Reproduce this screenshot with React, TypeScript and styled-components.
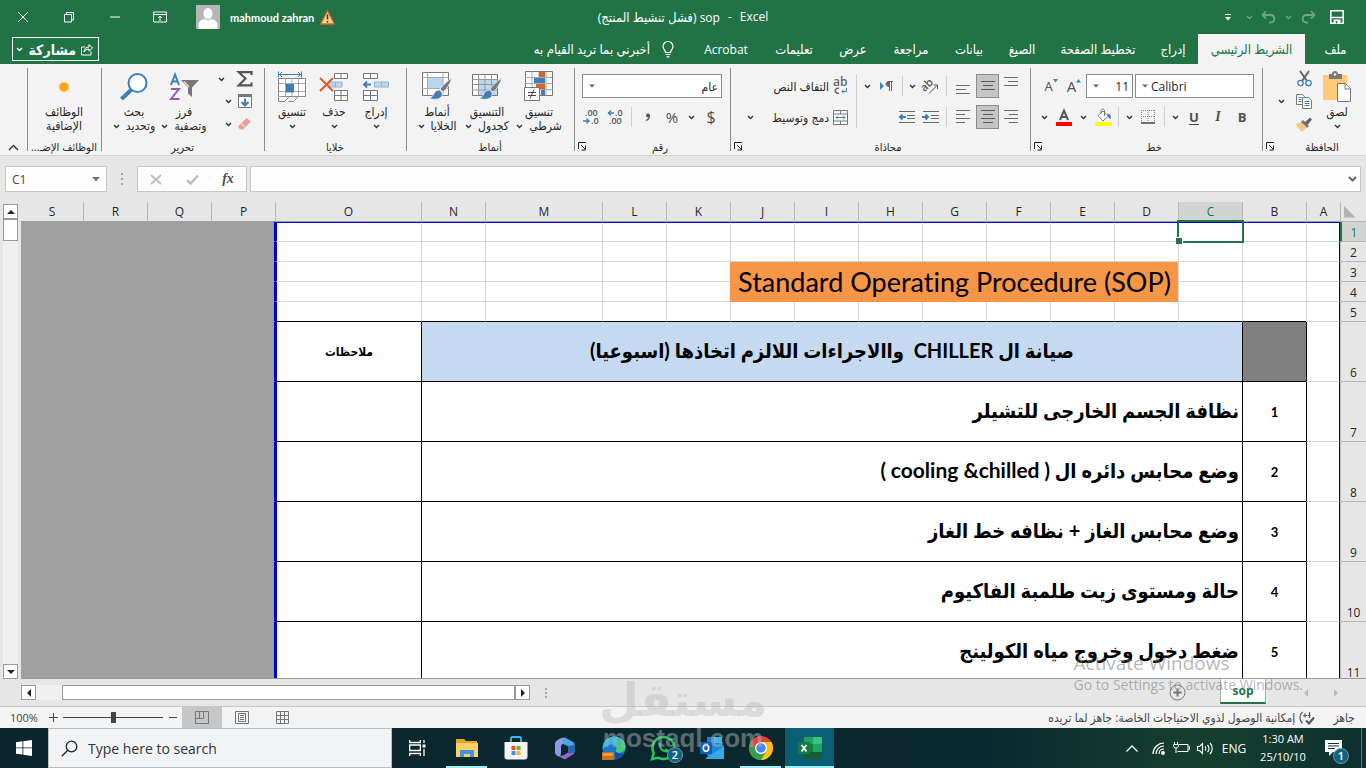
import React from "react";
import styled, { createGlobalStyle } from "styled-components";

const UI_FONT = '"Open Sans", "DejaVu Sans Condensed", "DejaVu Sans", sans-serif';
const SHEET_FONT = 'Lato, "DejaVu Sans Condensed", "DejaVu Sans", sans-serif';
const GREEN = "#217346";
const BLUE = "#3f7fb8";

const GlobalStyle = createGlobalStyle`
  * { box-sizing: border-box; }
  body { margin: 0; font-family: ${UI_FONT}; font-size: 12px; color: #262626; }
  button, input, select { font: inherit; color: inherit; margin: 0; padding: 0; border: 0; background: none; border-radius: 0; }
  svg { display: block; flex: none; direction: ltr; overflow: visible; }
`;

const Page = styled.div`
  display: flex;
  flex-direction: column;
  height: 100vh;
  overflow: hidden;
  position: relative;
  background: #e6e6e6;
`;

/* ---------- title bar ---------- */

const TitleBar = styled.header`
  display: grid;
  grid-template-columns: 1fr auto 1fr;
  align-items: center;
  height: 34px;
  flex: none;
  background: ${GREEN};
  color: #fff;
`;

const TitleSide = styled.div<{ $end?: boolean }>`
  display: flex;
  align-items: center;
  justify-content: ${(p) => (p.$end ? "flex-end" : "flex-start")};
  padding-right: ${(p) => (p.$end ? 9 : 0)}px;
`;

const IconButton = styled.button<{ $w: number; $h?: number; $dim?: boolean; $on?: boolean }>`
  display: flex;
  align-items: center;
  justify-content: center;
  flex: none;
  direction: ltr;
  width: ${(p) => p.$w}px;
  height: ${(p) => p.$h ?? 24}px;
  opacity: ${(p) => (p.$dim ? 0.35 : 1)};
  background: ${(p) => (p.$on ? "#c5c5c5" : "transparent")};
  border: ${(p) => (p.$on ? "1px solid #8c8c8c" : "0")};
`;

const Avatar = styled.span`
  margin-left: 14px;
  margin-right: 10px;
`;

const UserName = styled.span`
  font-family: Lato, sans-serif;
  font-size: 11px;
  font-weight: 700;
  margin-right: 6px;
`;

const DocTitle = styled.h1`
  margin: 0;
  font-size: 12px;
  font-weight: 400;
  display: flex;
  gap: 8px;
`;

const ArabicTitle = styled.bdi`
  font-size: 13px;
`;

/* ---------- tabs ---------- */

const TabBar = styled.nav`
  display: flex;
  align-items: stretch;
  height: 30px;
  flex: none;
  background: ${GREEN};
  color: #fff;
`;

const Tab = styled.button<{ $w: number; $active?: boolean; $latin?: boolean }>`
  width: ${(p) => p.$w}px;
  flex: none;
  white-space: nowrap;
  font-size: ${(p) => (p.$latin ? 12 : 13)}px;
  background: ${(p) => (p.$active ? "#f3f3f3" : "transparent")};
  color: ${(p) => (p.$active ? GREEN : "#fff")};
`;

const TellMe = styled.button`
  display: flex;
  align-items: center;
  gap: 12px;
  margin-right: 16px;
  white-space: nowrap;
  font-size: 13px;
`;

const Share = styled.button`
  display: flex;
  align-items: center;
  gap: 5px;
  margin: 3px auto 3px 12px;
  padding: 0 5px;
  border: 1px solid #fff;
  width: 87px;
  height: 24px;
  font-size: 14px;
  font-weight: 700;
  justify-content: space-between;
`;

/* ---------- ribbon ---------- */

const Ribbon = styled.div`
  display: flex;
  height: 92px;
  flex: none;
  background: #f3f3f3;
  border-bottom: 1px solid #d2d2d2;
`;

const Group = styled.section<{ $w: number }>`
  display: flex;
  flex-direction: column;
  width: ${(p) => p.$w}px;
  flex: none;
  height: 86px;
  margin-top: 4px;
  background: linear-gradient(#8c8c8c, #8c8c8c) left top / 1px 83px no-repeat;
`;

const GroupBody = styled.div<{ $pad?: number }>`
  display: flex;
  flex: 1;
  padding-right: ${(p) => p.$pad ?? 8}px;
`;

const GroupFoot = styled.div`
  display: flex;
  align-items: center;
  height: 16px;
  font-size: 11px;
`;

const GroupName = styled.span`
  flex: 1;
  text-align: center;
  white-space: nowrap;
`;

const Rows = styled.div`
  display: flex;
  flex-direction: column;
  gap: 7px;
  padding-top: 6px;
`;

const Row = styled.div`
  display: flex;
  align-items: center;
  height: 24px;
`;

const Stack = styled.div<{ $w: number }>`
  display: flex;
  flex-direction: column;
  width: ${(p) => p.$w}px;
`;

const Divider = styled.span<{ $tall?: boolean }>`
  width: 8px;
  height: ${(p) => (p.$tall ? 54 : 20)}px;
  background: linear-gradient(#d0d0d0, #d0d0d0) center / 1px 100% no-repeat;
`;

const BigButton = styled.button<{ $w: number }>`
  display: grid;
  grid-template-rows: 37px 14px 14px;
  justify-items: center;
  align-items: center;
  align-content: start;
  width: ${(p) => p.$w}px;
  flex: none;
  font-size: 12px;
  line-height: 14px;
  white-space: nowrap;
`;

const LabelLine = styled.span`
  display: flex;
  align-items: center;
  gap: 6px;
`;

const SelectBox = styled.span<{ $w: number }>`
  display: flex;
  align-items: center;
  flex: none;
  direction: ltr;
  width: ${(p) => p.$w}px;
  height: 24px;
  margin-left: 2px;
  padding-left: 6px;
  background: #fff;
  border: 1px solid #8c8c8c;
`;

const Select = styled.select<{ $right?: boolean }>`
  appearance: none;
  flex: 1;
  min-width: 0;
  height: 20px;
  padding: 0 3px;
  text-align: ${(p) => (p.$right ? "right" : "left")};
  text-align-last: ${(p) => (p.$right ? "right" : "left")};
  outline: 0;
`;

const Glyph = styled.span<{ $size?: number; $u?: boolean; $i?: boolean; $b?: boolean }>`
  color: #4f4f4f;
  font-size: ${(p) => p.$size ?? 13}px;
  font-weight: ${(p) => (p.$b ? 700 : 400)};
  font-style: ${(p) => (p.$i ? "italic" : "normal")};
  font-family: ${(p) => (p.$i ? '"Liberation Serif", serif' : UI_FONT)};
  border-bottom: ${(p) => (p.$u ? "1px solid #4f4f4f" : "0")};
  line-height: 14px;
`;

const TextButton = styled.button<{ $w: number }>`
  display: flex;
  align-items: center;
  gap: 4px;
  width: ${(p) => p.$w}px;
  height: 24px;
  padding-right: 4px;
  white-space: nowrap;
  font-size: 12px;
`;

const Collapse = styled.button`
  flex: 1;
  align-self: flex-end;
  display: flex;
  justify-content: center;
  padding-bottom: 4px;
`;

/* ---------- formula bar ---------- */

const FormulaBar = styled.div`
  display: flex;
  align-items: center;
  height: 46px;
  flex: none;
  padding: 0 5px;
`;

const WhiteBox = styled.div<{ $w?: number }>`
  display: flex;
  align-items: center;
  width: ${(p) => (p.$w ? p.$w + "px" : "auto")};
  flex: ${(p) => (p.$w ? "none" : "1")};
  height: 26px;
  background: #fdfdfd;
  border: 1px solid #c6c6c6;
  padding: 0 6px;
`;

const FormulaBox = styled(WhiteBox)`
  padding: 0 3px;
`;

const PlainInput = styled.input`
  flex: 1;
  min-width: 0;
  height: 22px;
  outline: 0;
  color: #444;
`;

const Dots = styled.span<{ $w: number }>`
  display: flex;
  justify-content: center;
  width: ${(p) => p.$w}px;
`;

/* ---------- sheet ---------- */

const SheetArea = styled.main`
  display: flex;
  flex: 1;
  min-height: 0;
`;

const VScroll = styled.div`
  display: flex;
  flex-direction: column;
  width: 21px;
  flex: none;
  padding: 2px 3px 0;
`;

const ScrollButton = styled.button`
  display: flex;
  align-items: center;
  justify-content: center;
  width: 15px;
  height: 15px;
  flex: none;
  background: #fff;
  border: 1px solid #999;
`;

const VThumb = styled.div`
  width: 15px;
  height: 22px;
  background: #fff;
  border: 1px solid #999;
`;

const VTrack = styled.div`
  flex: 1;
  width: 15px;
  background: #f0f0f0;
`;

const SheetView = styled.div`
  flex: 1;
  min-width: 0;
  overflow: hidden;
  border-bottom: 1px solid #999;
`;

const Table = styled.table`
  width: 100%;
  table-layout: fixed;
  border-collapse: separate;
  border-spacing: 0;
`;

const Tr = styled.tr<{ $h: number }>`
  height: ${(p) => p.$h}px;
`;

const ColHead = styled.th<{ $sel?: boolean; $first?: boolean }>`
  padding: 0;
  font-size: 12px;
  font-weight: 400;
  line-height: 18px;
  color: ${(p) => (p.$sel ? GREEN : "#262626")};
  background: ${(p) => (p.$sel ? "#d2d4d3" : "#e6e6e6")};
  border-bottom: 1px solid #9f9f9f;
  border-left: ${(p) => (p.$first ? 0 : 1)}px solid #b6b6b6;
`;

const Corner = styled.td`
  padding: 0 10px 0 0;
  border-bottom: 1px solid #b6b6b6;
  border-left: 1px solid #b6b6b6;
`;

const RowHead = styled.th<{ $sel?: boolean }>`
  padding: 0;
  vertical-align: bottom;
  font-size: 12px;
  font-weight: 400;
  line-height: 17px;
  color: ${(p) => (p.$sel ? GREEN : "#262626")};
  background: ${(p) => (p.$sel ? "#d2d4d3" : "#e6e6e6")};
  border-bottom: 1px solid #b6b6b6;
  border-left: ${(p) => (p.$sel ? "2px solid " + GREEN : "1px solid #b6b6b6")};
`;

interface CellProps {
  $l?: string;
  $b?: string;
  $blueTop?: boolean;
  $blueRight?: boolean;
  $blueLeft?: boolean;
  $bg?: string;
  $size?: number;
  $align?: string;
  $plain?: boolean;
}

const PRINT_BLUE = "#0000d0";

const Cell = styled.td<CellProps>`
  position: relative;
  padding: 0 3px;
  background: ${(p) => p.$bg ?? "#fff"};
  font-family: ${SHEET_FONT};
  font-size: ${(p) => p.$size ?? 13}px;
  font-weight: ${(p) => (p.$plain ? 400 : 700)};
  font-variant-ligatures: no-common-ligatures;
  line-height: 18px;
  color: #000;
  white-space: pre;
  text-align: ${(p) => p.$align ?? "center"};
  border-bottom: 1px solid ${(p) => p.$b ?? "#d4d4d4"};
  border-left: ${(p) => (p.$blueLeft ? "2px solid " + PRINT_BLUE : "1px solid " + (p.$l ?? "#d4d4d4"))};
  border-top: ${(p) => (p.$blueTop ? "1px solid " + PRINT_BLUE : "0")};
  border-right: ${(p) => (p.$blueRight ? "1px solid " + PRINT_BLUE : "0")};
`;

const TaskCell = styled(Cell)`
  padding-bottom: 3px;
`;

const Latin = styled.span`
  font-size: 21px;
`;

const Selection = styled.div`
  position: absolute;
  z-index: 1;
  top: -3px;
  left: -2px;
  right: -2px;
  bottom: -2px;
  border: 2px solid ${GREEN};
  &::after {
    content: "";
    position: absolute;
    left: -3px;
    bottom: -3px;
    width: 6px;
    height: 6px;
    background: ${GREEN};
    border-top: 1px solid #fff;
    border-right: 1px solid #fff;
  }
`;

/* ---------- sheet tabs + status ---------- */

const SheetFoot = styled.div`
  display: flex;
  align-items: center;
  height: 27px;
  flex: none;
  padding-left: 21px;
`;

const FootEnd = styled.div`
  display: flex;
  align-items: center;
  height: 27px;
  margin-left: auto;
  padding-right: 10px;
`;

const HTrack = styled.div`
  display: flex;
  width: 479px;
  flex: none;
  padding-left: 26px;
  background: linear-gradient(#f0f0f0, #f0f0f0) left / 26px 15px no-repeat;
`;

const HThumb = styled.div`
  flex: 1;
  height: 15px;
  background: #fff;
  border: 1px solid #999;
`;

const SheetTab = styled.button`
  align-self: flex-start;
  width: 46px;
  height: 25px;
  margin: 0 30px;
  background: #fff;
  color: ${GREEN};
  font-weight: 700;
  border: 1px solid #ababab;
  border-top: 0;
  border-bottom: 2px solid ${GREEN};
`;

const StatusBar = styled.footer`
  display: flex;
  align-items: center;
  height: 22px;
  flex: none;
  background: #f3f3f3;
  border-top: 1px solid #c6c6c6;
  font-size: 11px;
  color: #444;
`;

const ZoomValue = styled.span`
  width: 44px;
  padding-left: 10px;
`;

const Zoom = styled.input`
  appearance: none;
  width: 100px;
  height: 12px;
  background: linear-gradient(#444, #444) center / 100% 1px no-repeat;
  &::-webkit-slider-thumb {
    appearance: none;
    width: 5px;
    height: 11px;
    background: #444;
  }
`;

const ViewButton = styled.button<{ $on?: boolean }>`
  display: flex;
  align-items: center;
  justify-content: center;
  width: 40px;
  height: 21px;
  background: ${(p) => (p.$on ? "#c6c6c6" : "transparent")};
`;

const StatusText = styled.div`
  display: flex;
  align-items: center;
  gap: 18px;
  direction: rtl;
  margin-left: auto;
  padding-right: 11px;
  white-space: nowrap;
  font-size: 12px;
`;

const StatusItem = styled.span`
  display: flex;
  align-items: center;
  gap: 4px;
`;

/* ---------- taskbar ---------- */

const Taskbar = styled.div`
  display: flex;
  align-items: stretch;
  height: 40px;
  flex: none;
  color: #fff;
  background: linear-gradient(90deg, #0b262d 0%, #0c282f 72%, #15402f 88%, #10352f 96%, #0e3030 100%);
`;

const StartButton = styled.button`
  display: flex;
  align-items: center;
  justify-content: center;
  width: 48px;
`;

const SearchBox = styled.label`
  display: flex;
  align-items: center;
  gap: 10px;
  width: 344px;
  margin-right: 1px;
  padding-left: 12px;
  background: #f3f4f6;
  border: 1px solid #bdbdbd;
  color: #222;
`;

const SearchInput = styled.input`
  flex: 1;
  min-width: 0;
  font-size: 14px;
  outline: 0;
  &::placeholder { color: #333; opacity: 1; }
`;

const TaskButton = styled.button<{ $open?: boolean; $active?: boolean }>`
  position: relative;
  display: flex;
  align-items: center;
  justify-content: center;
  width: 49px;
  flex: none;
  background: ${(p) => (p.$active ? "#0a5f74" : "transparent")};
  &::after {
    content: "";
    display: ${(p) => (p.$open ? "block" : "none")};
    position: absolute;
    bottom: 0;
    left: ${(p) => (p.$active ? 0 : 4)}px;
    right: ${(p) => (p.$active ? 0 : 4)}px;
    height: 2px;
    background: #9cecf7;
  }
`;

const Badge = styled.span<{ $r: number; $b: number }>`
  position: absolute;
  right: ${(p) => p.$r}px;
  bottom: ${(p) => p.$b}px;
  width: 16px;
  height: 16px;
  border-radius: 50%;
  background: #0f6580;
  border: 1px solid #6d98a5;
  font-size: 11px;
  font-weight: 600;
  line-height: 14px;
  text-align: center;
`;

const Tray = styled.div`
  display: flex;
  align-items: center;
  margin-left: auto;
`;

const Lang = styled.button`
  width: 32px;
  font-size: 12px;
`;

const Clock = styled.time`
  width: 66px;
  text-align: center;
  font-size: 11px;
  line-height: 18px;
  white-space: nowrap;
`;

const Notify = styled.button`
  position: relative;
  display: flex;
  align-items: center;
  justify-content: center;
  width: 46px;
  height: 40px;
  padding-right: 10px;
  border-right: 1px solid #5d7577;
  margin-right: 4px;
`;

/* ---------- overlays ---------- */

const Activate = styled.div`
  position: absolute;
  z-index: 3;
  right: 63px;
  bottom: 73px;
  color: rgba(120, 120, 120, 0.55);
  font-size: 14px;
  line-height: 20px;
  pointer-events: none;
  white-space: nowrap;
`;

const ActivateTitle = styled.div`
  font-size: 19px;
  line-height: 24px;
`;

const Watermark = styled.div`
  position: absolute;
  z-index: 3;
  left: 0;
  right: 0;
  bottom: 15px;
  color: rgba(170, 175, 175, 0.5);
  font-family: "Liberation Sans", sans-serif;
  font-weight: 700;
  font-size: 26px;
  line-height: 30px;
  text-align: center;
  pointer-events: none;
`;

const WatermarkWord = styled.div`
  font-family: "DejaVu Sans", sans-serif;
  font-size: 46px;
  line-height: 46px;
  color: rgba(180, 180, 180, 0.4);
`;

/* ---------- drawings ---------- */

const Chev = ({ c = "#333" }: { c?: string }) => (
  <svg width="7" height="5" viewBox="0 0 7 5"><path d="M1 1l2.5 2.5L6 1" fill="none" stroke={c} strokeWidth="1.4" /></svg>
);
const Tri = () => (
  <svg width="6" height="4" viewBox="0 0 6 4"><path d="M0 .5h6L3 3.5z" fill="#666" /></svg>
);
const Launcher = () => (
  <svg width="9" height="9" viewBox="0 0 9 9" fill="none" stroke="#222"><path d="M.5 7V.5H8M3 3l4.500 4.500M7.500 3.500v4.500H3.500" /></svg>
);
const Lines = ({ w, y = 0 }: { w: number[]; y?: number }) => (
  <svg width="16" height="18" viewBox="0 0 16 18" stroke="#6a6a6a">
    {w.map((n, i) => {
      const side = n < 0;
      const len = Math.abs(n);
      const x1 = side ? 1 : 15 - len;
      return <path key={i} d={`M${x1} ${y + i * 4 + 0.5}h${len}`} />;
    })}
  </svg>
);
const Indent = ({ out }: { out?: boolean }) => (
  <svg width="18" height="14" viewBox="0 0 18 14" fill="none" stroke="#6a6a6a">
    <path d="M1 1.500h16M9 5.500h8M9 8.500h8M1 12.500h16" />
    {out ? <path d="M8 7H2M4.500 4.500L2 7l2.500 2.500" stroke={BLUE} strokeWidth="2" /> : <path d="M0 7h6M3.500 4.500L6 7 3.500 9.500" stroke={BLUE} strokeWidth="2" />}
  </svg>
);
const Brush = () => (
  <g>
    <path d="M31 7c-5 3-9 7-12 11l3 3c4-3 7-8 9-14z" fill="#7a7a7a" stroke="#f3f3f3" strokeWidth=".8" />
    <path d="M18.500 19c-4 0-5 2.500-6.500 5.500-1 1.500-2.500 2.500-4 3 5 1.500 10.500 1 12.500-2 1.200-2 .800-4.500-2-6.500z" fill={BLUE} stroke="#f3f3f3" strokeWidth=".8" />
  </g>
);

const letters = "ABCDEFGHIJKLMNOPQRS".split("");
const widths = [26, 34, 64, 64, 64, 64, 64, 64, 64, 64, 64, 64, 64, 117, 64, 146, 64, 64, 64];
const tasks: Record<number, React.ReactNode> = {
  7: "نظافة الجسم الخارجى للتشيلر",
  8: <>وضع محابس دائره ال ( <Latin>cooling &amp;chilled</Latin> )</>,
  9: "وضع محابس الغاز + نظافه خط الغاز",
  10: "حالة ومستوى زيت طلمبة الفاكيوم",
  11: "ضغط دخول وخروج مياه الكولينج",
};
const OUT = "#a0a0a0";

function Outside() {
  return (
    <>
      {["P", "Q", "R", "S"].map((l) => (
        <Cell key={l} $bg={OUT} $b={OUT} $l={OUT} $blueRight={l === "P"} />
      ))}
    </>
  );
}

function GridRow({ n }: { n: number }) {
  const last = n === 5 ? "#000" : undefined;
  return (
    <Tr $h={20}>
      <RowHead scope="row" $sel={n === 1}>{n}</RowHead>
      {letters.slice(0, 15).map((l, i) => {
        if ((n === 3 || n === 4) && i >= 3 && i <= 9) {
          if (n === 3 && l === "D")
            return (
              <Cell key={l} colSpan={7} rowSpan={2} $bg="#f79646" $b="#f79646" $l="#f79646" $size={27} $plain>
                <bdi dir="ltr">Standard Operating Procedure (SOP)</bdi>
              </Cell>
            );
          return null;
        }
        return (
          <Cell key={l} $blueTop={n === 1} $blueRight={l === "A"} $blueLeft={l === "O"} $b={l === "A" ? undefined : last}>
            {n === 1 && l === "C" ? <Selection /> : null}
          </Cell>
        );
      })}
      <Outside />
    </Tr>
  );
}

function TaskRow({ n }: { n: number }) {
  const head = n === 6;
  return (
    <Tr $h={60}>
      <RowHead scope="row">{n}</RowHead>
      <Cell $blueRight $l="#000" />
      <Cell $l="#000" $b="#000" $bg={head ? "#808080" : undefined}>{head ? "" : n - 6}</Cell>
      {head ? (
        <TaskCell colSpan={12} $l="#000" $b="#000" $bg="#c5d9f1" $size={20}>
          {"صيانة ال CHILLER  واالاجراءات اللالزم اتخاذها (اسبوعيا)"}
        </TaskCell>
      ) : (
        <TaskCell colSpan={12} $l="#000" $b="#000" $size={20} $align="right">{tasks[n]}</TaskCell>
      )}
      <Cell $blueLeft $b="#000" $size={12}>{head ? "ملاحظات" : ""}</Cell>
      <Outside />
    </Tr>
  );
}

function Title() {
  return (
    <TitleBar>
      <TitleSide>
        <IconButton $w={46} aria-label="Close"><svg width="12" height="12" viewBox="0 0 12 12" stroke="#fff"><path d="M1 1l10 10M11 1L1 11" /></svg></IconButton>
        <IconButton $w={46} aria-label="Restore"><svg width="12" height="12" viewBox="0 0 12 12" stroke="#fff" fill="none"><path d="M1.500 3.500h7v7.500h-7zM3.500 3.500V1.500h7v7.500h-2" /></svg></IconButton>
        <IconButton $w={46} aria-label="Minimize"><svg width="10" height="2"><path d="M0 1h10" stroke="#fff" /></svg></IconButton>
        <IconButton $w={44} aria-label="Ribbon display"><svg width="14" height="12" viewBox="0 0 14 12" stroke="#fff" fill="none"><path d="M.5 1h13v10H.5zM.5 3.500h13M7 10V5M5 7l2-2 2 2" /></svg></IconButton>
        <Avatar><svg width="24" height="24" viewBox="0 0 24 24"><path d="M0 0h24v24H0z" fill="#b5b5b5" /><ellipse cx="12" cy="8.500" rx="4.500" ry="5.500" fill="#fff" /><path d="M2.500 24v-4.500C2.500 16 6 14.500 9 14c2 1.500 4 1.500 6 0 3 .5 6.500 2 6.500 5.500V24z" fill="#fff" /></svg></Avatar>
        <UserName>mahmoud zahran</UserName>
        <svg width="15" height="15" viewBox="0 0 15 15"><path d="M7.500.8L14.300 14H.7z" fill="#fbd28a" stroke="#d9692c" strokeWidth="1.300" /><path d="M7.500 4.500v5M7.500 11v1.500" stroke="#333" strokeWidth="1.500" /></svg>
      </TitleSide>
      <DocTitle><span>(<ArabicTitle>فشل تنشيط المنتج</ArabicTitle>) sop</span><span>-</span><span>Excel</span></DocTitle>
      <TitleSide $end>
        <IconButton $w={22} aria-label="Customize"><svg width="6" height="7" viewBox="0 0 6 7"><path d="M0 .5h6" stroke="#fff" /><path d="M0 3h6L3 6.500z" fill="#fff" /></svg></IconButton>
        <IconButton $w={20} $dim aria-label="Undo list"><Chev c="#fff" /></IconButton>
        <IconButton $w={18} $dim aria-label="Undo"><svg width="15" height="14" viewBox="0 0 15 14" fill="none" stroke="#fff" strokeWidth="1.800"><path d="M5 1L1.500 5 5 8.500M2 5h7.500c5 0 5 7.500 0 7.500H8" /></svg></IconButton>
        <IconButton $w={22} $dim aria-label="Redo list"><Chev c="#fff" /></IconButton>
        <IconButton $w={18} $dim aria-label="Redo"><svg width="15" height="14" viewBox="0 0 15 14" fill="none" stroke="#fff" strokeWidth="1.800"><path d="M10 1l3.500 4L10 8.500M13 5H5.500c-5 0-5 7.500 0 7.500H7" /></svg></IconButton>
        <IconButton $w={40} aria-label="Save"><svg width="14" height="14" viewBox="0 0 14 14" fill="none" stroke="#fff" strokeWidth="1.600"><path d="M.8.8h12.400v12.400H.8zM1 7.500h12" /><path d="M3.500 9.500h7V13h-7z" fill="#fff" stroke="none" /><path d="M6.500 11v2.500" stroke={GREEN} /></svg></IconButton>
      </TitleSide>
    </TitleBar>
  );
}

function Tabs() {
  return (
    <TabBar dir="rtl">
      <Tab $w={61}>ملف</Tab>
      <Tab $w={107} $active>الشريط الرئيسي</Tab>
      <Tab $w={50}>إدراج</Tab>
      <Tab $w={100}>تخطيط الصفحة</Tab>
      <Tab $w={52}>الصيغ</Tab>
      <Tab $w={54}>بيانات</Tab>
      <Tab $w={62}>مراجعة</Tab>
      <Tab $w={54}>عرض</Tab>
      <Tab $w={64}>تعليمات</Tab>
      <Tab $w={72} $latin>Acrobat</Tab>
      <TellMe>
        <svg width="12" height="17" viewBox="0 0 12 17" fill="none" stroke="#fff" strokeWidth="1.200"><path d="M3.500 11.500C3.500 9 1 8.500 1 5.500a5 5 0 0110 0c0 3-2.500 3.500-2.500 6zM3.500 13.500h5M4.500 15.800h3" /></svg>
        أخبرني بما تريد القيام به
      </TellMe>
      <Share>
        <svg width="12" height="13" viewBox="0 0 12 13" fill="none" stroke="#fff"><path d="M4 4H.5v8h9.500V8.500M3 9c.5-3.500 2-5 5-5V1.500L11.500 5 8 8V6C5.500 6 4 7 3 9z" /></svg>
        مشاركة
        <Chev c="#fff" />
      </Share>
    </TabBar>
  );
}

function Foot({ name, launcher }: { name: string; launcher?: boolean }) {
  return (
    <GroupFoot>
      <GroupName>{name}</GroupName>
      {launcher ? <IconButton $w={16} $h={14} aria-label="More options"><Launcher /></IconButton> : null}
    </GroupFoot>
  );
}

function RibbonBar() {
  return (
    <Ribbon dir="rtl">
      <Group $w={104}>
        <GroupBody $pad={10}>
          <BigButton $w={38}>
            <svg width="28" height="31" viewBox="0 0 28 31"><path d="M0 4h24v25H0z" fill="#fbc978" /><path d="M6 3h3c0-4 6-4 6 0h4v5H6z" fill="#777" /><circle cx="12" cy="3.500" r="1.300" fill="#f3f3f3" /><path d="M14.500 12.500h8l5 5v13h-13z" fill="#fff" stroke="#777" /><path d="M22 12.500V18h5.500" fill="none" stroke="#777" /></svg>
            <span>لصق</span>
            <Chev />
          </BigButton>
          <Stack $w={28}>
            <IconButton $w={28} $h={22} aria-label="Cut"><svg width="15" height="16" viewBox="0 0 15 16" fill="none"><path d="M3 0l7 10M12 0L5 10" stroke="#666" strokeWidth="2" /><circle cx="3.500" cy="12" r="2.700" stroke={BLUE} strokeWidth="1.300" /><circle cx="11.500" cy="12" r="2.700" stroke={BLUE} strokeWidth="1.300" /></svg></IconButton>
            <IconButton $w={28} $h={22} aria-label="Copy"><svg width="16" height="15" viewBox="0 0 16 15" fill="#fff" stroke="#777"><path d="M.5.5h6l2 2v8h-8z" /><path d="M6.500 3.500h6l3 3v8h-9z" /><path d="M2.500 3.500h3M2.500 5.500h3M2.500 7.500h3M8.500 7.500h5M8.500 9.500h5M8.500 11.500h5" stroke={BLUE} /></svg></IconButton>
            <IconButton $w={28} $h={24} aria-label="Format painter"><svg width="16" height="15" viewBox="0 0 16 15"><path d="M0 7l5-2 5 6-4 4C4 13 1 10 0 7z" fill="#f8c77c" /><path d="M5 5l2-2 6 6-2 2z" fill="#777" /><path d="M8.500 5.500L14 .5l2 2-4.500 5.500z" fill="#666" /></svg></IconButton>
          </Stack>
          <Stack $w={18}>
            <IconButton $w={18} $h={66} aria-label="Copy options"><Chev /></IconButton>
          </Stack>
        </GroupBody>
        <Foot name="الحافظة" launcher />
      </Group>

      <Group $w={232}>
        <GroupBody>
          <Rows>
            <Row>
              <SelectBox $w={119}><Tri /><Select aria-label="Font" defaultValue="Calibri"><option>Calibri</option></Select></SelectBox>
              <SelectBox $w={47}><Tri /><Select aria-label="Font size" $right defaultValue="11"><option>11</option></Select></SelectBox>
              <IconButton $w={20} aria-label="Grow font"><Glyph $size={15}>A</Glyph><svg width="5" height="14" viewBox="0 0 5 14"><path d="M0 3.500L2.500 0 5 3.500z" fill={BLUE} /></svg></IconButton>
              <IconButton $w={26} aria-label="Shrink font"><Glyph $size={13}>A</Glyph><svg width="5" height="14" viewBox="0 0 5 14"><path d="M0 0h5L2.500 3.500z" fill={BLUE} /></svg></IconButton>
            </Row>
            <Row>
              <IconButton $w={24} aria-label="Bold"><Glyph $b>B</Glyph></IconButton>
              <IconButton $w={24} aria-label="Italic"><Glyph $i $b $size={14}>I</Glyph></IconButton>
              <IconButton $w={24} aria-label="Underline"><Glyph $u $b>U</Glyph></IconButton>
              <IconButton $w={14} aria-label="Underline options"><Chev /></IconButton>
              <Divider />
              <IconButton $w={24} aria-label="Borders"><svg width="14" height="14" viewBox="0 0 14 14" fill="none" stroke="#888"><path d="M.5 0v12M13.500 0v12M7 0v12M0 .5h14M0 6.500h14" strokeDasharray="1 1" /><path d="M0 13h14" stroke="#444" strokeWidth="1.500" /></svg></IconButton>
              <IconButton $w={14} aria-label="Border options"><Chev /></IconButton>
              <Divider />
              <IconButton $w={22} aria-label="Fill color"><svg width="17" height="17" viewBox="0 0 17 17"><path d="M3 6.500L8 2l5.500 5L8 12z" fill="#fff" stroke="#777" /><path d="M6 5V2c0-2.500 3.500-2.500 3.500 0v5" fill="none" stroke="#777" /><path d="M13 4.500c3 1 3.500 3.500 2.500 6L12.500 7z" fill={BLUE} /><path d="M0 13h17v4H0z" fill="#ff0" /></svg></IconButton>
              <IconButton $w={18} aria-label="Fill options"><Chev /></IconButton>
              <IconButton $w={20} aria-label="Font color"><svg width="16" height="17" viewBox="0 0 16 17"><path d="M4 11L8 1.500 12 11M5.500 8h5" fill="none" stroke="#555" strokeWidth="2" /><path d="M0 13h16v4H0z" fill="#f00" /></svg></IconButton>
              <IconButton $w={20} aria-label="Font color options"><Chev /></IconButton>
            </Row>
          </Rows>
        </GroupBody>
        <Foot name="خط" launcher />
      </Group>

      <Group $w={300}>
        <GroupBody>
          <Rows>
            <Row>
              <IconButton $w={23} aria-label="Top align"><Lines w={[14, 10, 14]} y={0} /></IconButton>
              <IconButton $w={23} $on aria-label="Middle align"><svg width="16" height="18" viewBox="0 0 16 18" stroke="#5a5a5a"><path d="M1 4.500h14M3 8.500h10M1 12.500h14" /></svg></IconButton>
              <IconButton $w={26} aria-label="Bottom align"><Lines w={[14, -10, 14]} y={8} /></IconButton>
              <Divider />
              <IconButton $w={24} aria-label="Orientation"><svg width="17" height="17" viewBox="0 0 17 17"><text x="-1" y="10" transform="rotate(-45 6 8)" fontSize="11" fontWeight="600" fontFamily="Open Sans" fill="#555">ab</text><path d="M7 15.500L15 7.500M11.500 7H15.500V11" fill="none" stroke="#555" /></svg></IconButton>
              <IconButton $w={12} aria-label="Orientation options"><Chev /></IconButton>
              <Divider />
              <IconButton $w={24} aria-label="Text direction"><svg width="13" height="11" viewBox="0 0 13 11"><path d="M0 1v8l4-4z" fill={BLUE} /><path d="M9 .5c-4 0-4 5 0 5zM9 0.500h4M9.500 0v10M11.500 0v10" fill="#666" stroke="#666" /></svg></IconButton>
              <IconButton $w={14} aria-label="Direction options"><Chev /></IconButton>
            </Row>
            <Row>
              <IconButton $w={23} aria-label="Align right"><Lines w={[14, 9, 14, 9]} y={2} /></IconButton>
              <IconButton $w={23} $on aria-label="Align center"><svg width="16" height="18" viewBox="0 0 16 18" stroke="#5a5a5a"><path d="M1 2.500h14M3 6.500h10M1 10.500h14M3 14.500h10" /></svg></IconButton>
              <IconButton $w={26} aria-label="Align left"><Lines w={[-14, -9, -14, -9]} y={2} /></IconButton>
              <Divider />
              <IconButton $w={22} aria-label="Increase indent"><Indent /></IconButton>
              <IconButton $w={26} aria-label="Decrease indent"><Indent out /></IconButton>
            </Row>
          </Rows>
          <Rows><Divider $tall /></Rows>
          <Rows>
            <TextButton $w={84}>
              <svg width="15" height="17" viewBox="0 0 15 17"><text x="0" y="8" fontSize="12" fontWeight="600" fontFamily="Open Sans" fill="#666">ab</text><path d="M6 10.500c-5-1.500-5 6 0 4.500" fill="none" stroke="#666" strokeWidth="1.600" /><path d="M13.500 10v3.500H9M11 11.500l-2 2 2 2" fill="none" stroke={BLUE} /></svg>
              التفاف النص
            </TextButton>
            <Row>
              <TextButton $w={90}>
                <svg width="15" height="15" viewBox="0 0 15 15" fill="#fff" stroke="#777"><path d="M.5.5h14v14H.5zM.5 4h14M.5 11h14M7.500.5V4M7.500 11v3.500" /><path d="M3 7.500h9M5 5.500l-2 2 2 2M10 5.500l2 2-2 2" fill="none" stroke={BLUE} /></svg>
                دمج وتوسيط
              </TextButton>
              <IconButton $w={24} aria-label="Merge options"><Chev /></IconButton>
            </Row>
          </Rows>
        </GroupBody>
        <Foot name="محاذاة" launcher />
      </Group>

      <Group $w={156}>
        <GroupBody>
          <Rows>
            <SelectBox $w={140}><Tri /><Select aria-label="Number format" dir="rtl" $right defaultValue="عام"><option>عام</option></Select></SelectBox>
            <Row>
              <IconButton $w={22} aria-label="Currency"><Glyph $size={16}>$</Glyph></IconButton>
              <IconButton $w={17} aria-label="Currency options"><Chev /></IconButton>
              <IconButton $w={22} aria-label="Percent"><Glyph $size={15}>%</Glyph></IconButton>
              <IconButton $w={26} aria-label="Comma style"><svg width="6" height="8" viewBox="0 0 6 8"><circle cx="3" cy="2.500" r="2" fill="#555" /><path d="M4.500 2.500C4.500 5 3.500 6.500 1 7.500" stroke="#555" strokeWidth="1.300" fill="none" /></svg></IconButton>
              <Divider />
              {[0, 1].map((k) => (
                <IconButton key={k} $w={24} aria-label={k ? "Decrease decimal" : "Increase decimal"}>
                  <svg width="17" height="16" viewBox="0 0 17 16" fontSize="9" fontFamily="Open Sans" fontWeight="600">
                    <text x={k ? 2 : 8} y="7" fill="#555">{k ? ".00" : ".0"}</text>
                    <text x={k ? 8 : 2} y="15" fill="#555">{k ? ".0" : ".00"}</text>
                    {k ? <path d="M0 12h6M3.500 9.500L6 12l-2.500 2.500" fill="none" stroke={BLUE} strokeWidth="1.400" /> : <path d="M7 4H1M4 1.500L1.500 4 4 6.500" fill="none" stroke={BLUE} strokeWidth="1.400" />}
                  </svg>
                </IconButton>
              ))}
            </Row>
          </Rows>
        </GroupBody>
        <Foot name="رقم" launcher />
      </Group>

      <Group $w={168}>
        <GroupBody $pad={9}>
          <BigButton $w={52}>
            <svg width="30" height="31" viewBox="0 0 30 31"><path d="M1.500.5h27v24h-27z" fill="#fff" stroke="#777" /><path d="M8 .5v24M15 .5v24M22 .5v24M1.500 6.500h27M1.500 12.500h27M1.500 18.500h27" stroke="#aaa" /><path d="M15 1h6v5h-6zM12 13h9v5h-9z" fill="#dc6030" /><path d="M10 7h11v5H10zM17 19h4v5h-4z" fill={BLUE} /><path d="M.5 16.500h15v13H.5z" fill="#fff" stroke="#777" /><path d="M4 21.500h8M4 24.500h8M10 18.500l-4 9" stroke="#444" /></svg>
            <span>تنسيق</span><LabelLine>شرطي <Chev /></LabelLine>
          </BigButton>
          <BigButton $w={52}>
            <svg width="32" height="31" viewBox="0 0 32 31"><path d="M1.500 3.500h25v21h-25z" fill="#fff" stroke="#777" /><path d="M8 9h18v15H8z" fill="#b9d7ee" /><path d="M7.500 3.500v21M14 3.500v21M20.500 3.500v21M1.500 8.500h25M1.500 13.500h25M1.500 19h25" stroke="#999" /><Brush /></svg>
            <span>التنسيق</span><LabelLine>كجدول <Chev /></LabelLine>
          </BigButton>
          <BigButton $w={48}>
            <svg width="32" height="31" viewBox="0 0 32 31"><path d="M1.500 1.500h26v23h-26z" fill="#fff" stroke="#777" /><path d="M7 6h15v11H7z" fill="#b9d7ee" /><path d="M6.500 1.500v23M22 1.500v23M1.500 6.500h26M1.500 17.500h26" stroke="#aaa" /><Brush /></svg>
            <span>أنماط</span><LabelLine>الخلايا <Chev /></LabelLine>
          </BigButton>
        </GroupBody>
        <Foot name="أنماط" />
      </Group>

      <Group $w={142}>
        <GroupBody $pad={9}>
          <BigButton $w={42}>
            <svg width="28" height="30" viewBox="0 0 28 30" fill="#fff" stroke="#777"><path d="M1.500 1.500h14v5h-14zM8.500 1.500v5M1.500 18.500h14v10h-14zM8.500 18.500v10M1.500 23.500h14" /><path d="M12.500 10h14v5h-14zM19.500 10v5" fill="#b9d7ee" stroke="#8fb3cc" /><path d="M9 12.500H2M5 9.500l-3 3 3 3" fill="none" stroke={BLUE} strokeWidth="1.800" /></svg>
            <span>إدراج</span><Chev />
          </BigButton>
          <BigButton $w={42}>
            <svg width="30" height="30" viewBox="0 0 30 30" fill="#fff" stroke="#777"><path d="M15.500 1.500h13v5h-13zM22 1.500v5M15.500 18.500h13v10h-13zM22 18.500v10M15.500 23.500h13" /><path d="M10 10h13v5H10zM16.500 10v5" fill="#b9d7ee" stroke="#8fb3cc" /><path d="M1 6l13 13M14 6L1 19" stroke="#dc5b27" strokeWidth="2" /></svg>
            <span>حذف</span><Chev />
          </BigButton>
          <BigButton $w={42}>
            <svg width="28" height="32" viewBox="0 0 28 32" fill="#fff" stroke="#888"><path d="M.5 7.500h27v18H.5z" /><path d="M7.500 7.500v18M20.500 7.500v18M.5 12.500h27M.5 20.500h27M14 7.500v18" stroke="#aaa" /><path d="M8 13h8v8.500H8z" fill={BLUE} stroke="none" /><path d="M.5 25.500v5l6 0 4-4M10.500 30.500l5 0 5-5" /><path d="M1 3.500h22M4 1L1.500 3.500 4 6M20 1l2.500 2.500L20 6M.5.500v6M23.500.500v6" fill="none" stroke={BLUE} /></svg>
            <span>تنسيق</span><Chev />
          </BigButton>
        </GroupBody>
        <Foot name="خلايا" />
      </Group>

      <Group $w={163}>
        <GroupBody $pad={7}>
          <Stack $w={24}>
            <IconButton $w={24} $h={22} aria-label="AutoSum"><svg width="16" height="16" viewBox="0 0 16 16"><path d="M14.500 4V1.200H1.800L8.500 7.500l-6.700 6.800H14.500v-2.800" fill="none" stroke="#555" strokeWidth="2.200" /></svg></IconButton>
            <IconButton $w={24} $h={22} aria-label="Fill"><svg width="14" height="16" viewBox="0 0 14 16"><path d="M.5 1.500h13v13H.5z" fill="#fff" stroke="#777" /><path d="M0 1h14v3H0z" fill="#777" /><path d="M7 5.500v7M3.500 9L7 12.500 10.500 9" fill="none" stroke={BLUE} strokeWidth="2" /></svg></IconButton>
            <IconButton $w={24} $h={24} aria-label="Clear"><svg width="14" height="12" viewBox="0 0 14 12"><path d="M0 8.500L8.500 0l4.500 3.500-8 8H2z" fill="#e5a598" /><path d="M3 5.500l4.500 4" stroke="#f3f3f3" /></svg></IconButton>
          </Stack>
          <Stack $w={24}>
            <IconButton $w={24} $h={22} aria-label="Sum options"><Chev /></IconButton>
            <IconButton $w={10} $h={22} aria-label="Fill options"><Chev /></IconButton>
            <IconButton $w={10} $h={24} aria-label="Clear options"><Chev /></IconButton>
          </Stack>
          <BigButton $w={50}>
            <svg width="30" height="28" viewBox="0 0 30 28"><path d="M2 12L6 1.500 10 12M3.500 8.500h5.500" fill="none" stroke={BLUE} strokeWidth="2" /><path d="M2 16h8L2 26h8.500" fill="none" stroke="#8b5fb0" strokeWidth="2" /><path d="M12 7h18l-7 7.500V24l-4-3.500v-6z" fill="#777" /><path d="M15 8.500l5 5.500" stroke="#ddd" strokeWidth="1.500" /></svg>
            <span>فرز</span><LabelLine>وتصفية <Chev /></LabelLine>
          </BigButton>
          <BigButton $w={50}>
            <svg width="28" height="29" viewBox="0 0 28 29"><circle cx="17.500" cy="11" r="9" fill="#fff" stroke={BLUE} strokeWidth="2" /><path d="M11 18l-9.500 9" stroke={BLUE} strokeWidth="4" /></svg>
            <span>بحث</span><LabelLine>وتحديد <Chev /></LabelLine>
          </BigButton>
        </GroupBody>
        <Foot name="تحرير" />
      </Group>

      <Group $w={74}>
        <GroupBody $pad={0}>
          <BigButton $w={74}>
            <svg width="12" height="12" viewBox="0 0 12 12"><circle cx="6" cy="6" r="5.500" fill="#fbd37d" /><circle cx="6" cy="6" r="4.300" fill="#f5a318" /></svg>
            <span>الوظائف</span><span>الإضافية</span>
          </BigButton>
        </GroupBody>
        <Foot name="الوظائف الإضـ..." />
      </Group>
      <Collapse aria-label="Collapse ribbon"><svg width="11" height="7" viewBox="0 0 11 7" fill="none" stroke="#333"><path d="M1 6l4.500-4.500L10 6" strokeWidth="1.400" /></svg></Collapse>
    </Ribbon>
  );
}

function Formula() {
  return (
    <FormulaBar>
      <WhiteBox $w={102}>
        <PlainInput aria-label="Name box" defaultValue="C1" />
        <svg width="8" height="5" viewBox="0 0 8 5"><path d="M0 0h8L4 4.500z" fill="#777" /></svg>
      </WhiteBox>
      <Dots $w={30}><svg width="2" height="12" fill="#aaa"><path d="M0 0h2v2H0zM0 5h2v2H0zM0 10h2v2H0z" /></svg></Dots>
      <WhiteBox $w={110}>
        <IconButton $w={24} aria-label="Cancel"><svg width="12" height="11" viewBox="0 0 12 11" stroke="#bdbdbd" strokeWidth="1.800"><path d="M1 1l10 9M11 1L1 10" /></svg></IconButton>
        <IconButton $w={48} aria-label="Enter"><svg width="13" height="11" viewBox="0 0 13 11" fill="none" stroke="#bdbdbd" strokeWidth="2.500"><path d="M1 6l3.500 3.500L12 1.500" /></svg></IconButton>
        <IconButton $w={24} aria-label="Insert function"><Glyph $i $b $size={14}>fx</Glyph></IconButton>
      </WhiteBox>
      <Dots $w={3} />
      <FormulaBox>
        <PlainInput aria-label="Formula" />
        <svg width="9" height="6" viewBox="0 0 9 6"><path d="M1 1l3.500 3.500L8 1" fill="none" stroke="#666" strokeWidth="2" /></svg>
      </FormulaBox>
    </FormulaBar>
  );
}

function Sheet() {
  return (
    <SheetArea>
      <VScroll>
        <ScrollButton aria-label="Scroll up"><svg width="8" height="4" viewBox="0 0 8 4"><path d="M0 4h8L4 0z" fill="#222" /></svg></ScrollButton>
        <VThumb />
        <VTrack />
        <ScrollButton aria-label="Scroll down"><svg width="8" height="4" viewBox="0 0 8 4"><path d="M0 0h8L4 4z" fill="#222" /></svg></ScrollButton>
      </VScroll>
      <SheetView>
        <Table dir="rtl">
          <colgroup>
            {widths.map((w, i) => <col key={i} width={w} />)}
            <col />
          </colgroup>
          <thead>
            <Tr $h={20}>
              <Corner><svg width="12" height="12" viewBox="0 0 12 12"><path d="M0 0v11.500h11.500z" fill="#b2b2b2" /></svg></Corner>
              {letters.map((l) => <ColHead key={l} scope="col" $sel={l === "C"} $first={l === "S"}>{l}</ColHead>)}
            </Tr>
          </thead>
          <tbody>
            {[1, 2, 3, 4, 5].map((n) => <GridRow key={n} n={n} />)}
            {[6, 7, 8, 9, 10, 11].map((n) => <TaskRow key={n} n={n} />)}
          </tbody>
        </Table>
      </SheetView>
    </SheetArea>
  );
}

function Bottom() {
  return (
    <>
      <SheetFoot>
        <ScrollButton aria-label="Scroll left"><svg width="4" height="8" viewBox="0 0 4 8"><path d="M4 0v8L0 4z" fill="#222" /></svg></ScrollButton>
        <HTrack><HThumb /></HTrack>
        <ScrollButton aria-label="Scroll right"><svg width="4" height="8" viewBox="0 0 4 8"><path d="M0 0v8l4-4z" fill="#222" /></svg></ScrollButton>
        <Dots $w={32}><svg width="2" height="10" fill="#aaa"><path d="M0 0h2v2H0zM0 4h2v2H0zM0 8h2v2H0z" /></svg></Dots>
        <FootEnd>
          <IconButton $w={26} aria-label="New sheet"><svg width="17" height="17" viewBox="0 0 17 17" fill="none" stroke="#777"><circle cx="8.500" cy="8.500" r="7.500" /><path d="M8.500 4.500v8M4.500 8.500h8" strokeWidth="2" /></svg></IconButton>
          <SheetTab>sop</SheetTab>
          <IconButton $w={20} aria-label="Next sheet"><svg width="4" height="8" viewBox="0 0 4 8"><path d="M4 0v8L0 4z" fill="#bbb" /></svg></IconButton>
          <IconButton $w={40} aria-label="Previous sheet"><svg width="4" height="8" viewBox="0 0 4 8"><path d="M0 0v8l4-4z" fill="#bbb" /></svg></IconButton>
        </FootEnd>
      </SheetFoot>
      <StatusBar>
        <ZoomValue>100%</ZoomValue>
        <IconButton $w={19} $h={20} aria-label="Zoom in"><svg width="9" height="9" stroke="#444"><path d="M0 4.500h9M4.500 0v9" /></svg></IconButton>
        <Zoom type="range" min="10" max="190" defaultValue="100" aria-label="Zoom" />
        <IconButton $w={19} $h={20} aria-label="Zoom out"><svg width="8" height="1" stroke="#444"><path d="M0 .5h8" /></svg></IconButton>
        <ViewButton $on aria-label="Normal view"><svg width="15" height="13" viewBox="0 0 15 13" fill="none" stroke="#777"><path d="M.5.5h13v12H.5zM.5 7.500h8v-7M4.500.5v7" /></svg></ViewButton>
        <ViewButton aria-label="Page layout"><svg width="14" height="13" viewBox="0 0 14 13" fill="none" stroke="#777"><path d="M.5.5h13v12H.5zM3.500 2.500h7v8h-7zM5 4.500h4M5 6.500h4M5 8.500h4" /></svg></ViewButton>
        <ViewButton aria-label="Page break"><svg width="13" height="13" viewBox="0 0 13 13" fill="none" stroke="#777"><path d="M.5.5h12v12H.5zM4.500.5v12M8.500.5v12M.5 4.500h12M.5 8.500h12" /></svg></ViewButton>
        <StatusText>
          <span>جاهز</span>
          <StatusItem>
            <svg width="16" height="14" viewBox="0 0 16 14" fill="none" stroke="#555" strokeWidth="1.200"><path d="M3.500 1C0 4 0 9 3.500 12.500M4 4.500h4M6 2.500v4M8.500 4.500h3M10.500 1v6" /><path d="M7 9.500l3 3 5-6" strokeWidth="2" /></svg>
            إمكانية الوصول لذوي الاحتياجات الخاصة: جاهز لما تريده
          </StatusItem>
        </StatusText>
      </StatusBar>
    </>
  );
}

function Tasks() {
  return (
    <Taskbar>
      <StartButton aria-label="Start"><svg width="16" height="16" viewBox="0 0 16 16" fill="#fff"><path d="M0 2.200l6.500-.9v6.200H0zM7.300 1.200L16 0v7.500H7.300zM0 8.300h6.500v6.300L0 13.700zM7.300 8.300H16V16l-8.700-1.200z" /></svg></StartButton>
      <SearchBox>
        <svg width="17" height="17" viewBox="0 0 17 17" fill="none" stroke="#222" strokeWidth="1.300"><circle cx="10.500" cy="6.500" r="5.300" /><path d="M6.500 10.500L.8 16.200" /></svg>
        <SearchInput placeholder="Type here to search" aria-label="Search" />
      </SearchBox>
      <TaskButton aria-label="Task view"><svg width="17" height="16" viewBox="0 0 17 16" fill="none" stroke="#fff" strokeWidth="1.300"><path d="M.7 0v2.500h10.600V0M.7 5h10.600v5.500H.7zM.7 16v-2.500h10.600V16M15 0v3M15 9v7" /><path d="M13.500 4.500h3v3h-3z" fill="#fff" stroke="none" /></svg></TaskButton>
      <TaskButton $open aria-label="File Explorer"><svg width="22" height="19" viewBox="0 0 22 19"><path d="M0 0h8l2 2h11v5H0z" fill="#e7a42c" /><path d="M0 4h22v14H0z" fill="#fbd267" /><path d="M4 18v-7h14v7h-4v-3H8v3z" fill="#3f94dc" /></svg></TaskButton>
      <TaskButton aria-label="Store"><svg width="24" height="24" viewBox="0 0 24 24"><path d="M7 7V2.500C7 1.500 7.500 1 8.500 1h7c1 0 1.500.5 1.500 1.500V7" fill="none" stroke="#43b5e8" strokeWidth="1.800" /><path d="M.5 6h23v15c0 1.500-1 2.500-2.500 2.500H3C1.500 23.500.5 22.500.5 21z" fill="#f4f4f4" /><path d="M7.500 10h4v4h-4z" fill="#e8502b" /><path d="M12.500 10h4v4h-4z" fill="#6fb52c" /><path d="M7.500 15h4v4h-4z" fill="#2f9be8" /><path d="M12.500 15h4v4h-4z" fill="#f7b81a" /></svg></TaskButton>
      <TaskButton aria-label="Microsoft 365"><svg width="21" height="23" viewBox="0 0 21 23"><path d="M11 .5C7 .5 1 3.500 1 6.500v9c0 2.500 3 4 5.500 4l.5-4.500V9.500C7 7.500 9 6 12 5z" fill="#8f9be6" /><path d="M11 .5l8 4.500c1 .8 1.500 1.500 1.500 3v7l-6 1V9.500L8 6.500C9 4 9 2 11 .5z" fill="#4aa3e8" /><path d="M2 17.500l7 4.300c1 .6 2 .6 3 0l7-4.300c1-.8 1.500-1.500 1.500-3.500-2 2-4.500 2-6.500 1.500l-4 2.500c-3 1.700-6 1.500-8-.5z" fill="#9468cc" /><path d="M14.500 9.500l6-2v7c-2 2-4 2-6.500 1.500z" fill="#2866bd" /><path d="M10.700 8l3.300 2v3.500l-3.300 2-3.200-2V10z" fill="#0b262d" /></svg></TaskButton>
      <TaskButton aria-label="Edge"><svg width="24" height="24" viewBox="0 0 24 24"><circle cx="12" cy="12" r="11.500" fill="#1d77c8" /><path d="M.8 10C2 4 6.500.5 12 .5c6.500 0 11.500 5 11.500 10 0 4-3 6-6.500 6-2.500 0-4-1-3-2.500 1.500-2 0-5.500-3.500-5.500S3 10 .8 14z" fill="#35b8e0" /><path d="M17 1.800c4 2 6.500 5.500 6.500 8.700 0 4-3 6-6.500 6-2.500 0-4-1-3-2.500 1.500-2 1-4-1-5.500 3-1 4.500-3.500 4-6.700z" fill="#46c77c" /><path d="M0 16h12v8H0z" fill="#c8731d" /><path d="M1 17.500h10v2H1z" fill="#f0b34d" /><path d="M13 15c2 3 6 3.500 9 2-2 4-5.500 6.500-9 6.500z" fill="#174f99" /></svg></TaskButton>
      <TaskButton aria-label="WhatsApp"><svg width="26" height="26" viewBox="0 0 26 26" fill="none" stroke="#28c35a"><path d="M2 24l1.700-6A11 11 0 1113 24c-2 0-3.800-.5-5.300-1.300z" strokeWidth="2.500" /><path d="M8.500 8c-1 5 4 10 9 9.500l1.500-2.500-3-1.500-1.500 1.500c-2-1-3-2-3.500-3.500L12 10l-1-2.500z" fill="#28c35a" stroke="none" /></svg><Badge $r={4} $b={5}>2</Badge></TaskButton>
      <TaskButton aria-label="Outlook"><svg width="24" height="22" viewBox="0 0 24 22"><path d="M7 0h15v11H7z" fill="#1c7fd4" /><path d="M14 0h8v6h-8z" fill="#41b6ee" /><path d="M6 10l18-2v14H8z" fill="#1a8ad8" /><path d="M6 21l18-12v13H6z" fill="#38a9e8" /><path d="M0 5h12v12H0z" fill="#0b5fb8" /><ellipse cx="6" cy="11" rx="2.700" ry="3.200" fill="none" stroke="#fff" strokeWidth="1.600" /></svg></TaskButton>
      <TaskButton $open aria-label="Chrome"><svg width="24" height="24" viewBox="0 0 24 24"><circle cx="12" cy="12" r="12" fill="#e54335" /><path d="M1.600 6A12 12 0 0012 24l5.200-9H6.800z" fill="#2fa24f" /><path d="M12 24A12 12 0 0022.400 6H12l5.200 9z" fill="#fbc116" /><circle cx="12" cy="12" r="6" fill="#fff" /><circle cx="12" cy="12" r="4.700" fill="#3f86ee" /></svg></TaskButton>
      <TaskButton $open $active aria-label="Excel"><svg width="24" height="22" viewBox="0 0 24 22"><path d="M6 0h9v7H6z" fill="#21a05f" /><path d="M15 0h9v7h-9z" fill="#33c481" /><path d="M6 7h9v8H6z" fill="#107c41" /><path d="M15 7h9v8h-9z" fill="#21a366" /><path d="M6 15h18v7H6z" fill="#185c37" /><path d="M0 5h12v12H0z" fill="#107c41" /><path d="M3.500 8l5 6.500M8.500 8l-5 6.500" stroke="#fff" strokeWidth="1.800" /></svg></TaskButton>
      <Tray>
        <IconButton $w={28} aria-label="Hidden icons"><svg width="12" height="7" viewBox="0 0 12 7" fill="none" stroke="#fff" strokeWidth="1.300"><path d="M.5 6.500L6 1l5.500 5.500" /></svg></IconButton>
        <IconButton $w={24} aria-label="Network"><svg width="13" height="13" viewBox="0 0 13 13" fill="none" stroke="#fff" strokeWidth="1.200"><path d="M1 12C1 6 6 1 12 1M4 12c0-4.500 3.500-8 8-8M7 12c0-3 2-5 5-5" /><circle cx="11" cy="11" r="1.300" fill="#fff" /></svg></IconButton>
        <IconButton $w={22} aria-label="Battery"><svg width="17" height="12" viewBox="0 0 17 12" fill="none" stroke="#fff"><path d="M6 2.500h9v7H4.500M15.500 4.500h1v3h-1M1.500 0v2M4.500 0v2M.5 2.500h5c0 3-1 3.500-2.500 3.500S.5 5.500.5 2.500zM3 6v5" /></svg></IconButton>
        <IconButton $w={26} aria-label="Volume"><svg width="17" height="13" viewBox="0 0 17 13" fill="none" stroke="#fff" strokeWidth="1.100"><path d="M.5 4.500h2l3-3v10l-3-3h-2zM8 4.500c1 1 1 3 0 4M10.500 3c2 2 2 5 0 7M13 1c3 3 3 8 0 11" /></svg></IconButton>
        <Lang>ENG</Lang>
        <Clock>1:30 AM<br />25/10/10</Clock>
        <Notify aria-label="Notifications">
          <svg width="17" height="16" viewBox="0 0 17 16"><path d="M0 0h17v12H8l-4 4v-4H0z" fill="#fff" /><path d="M3 3.500h11M3 6h11M3 8.500h7" stroke="#12362f" /></svg>
          <Badge $r={12} $b={4}>1</Badge>
        </Notify>
      </Tray>
    </Taskbar>
  );
}

export default function App() {
  return (
    <>
      <GlobalStyle />
      <Page>
        <Title />
        <Tabs />
        <RibbonBar />
        <Formula />
        <Sheet />
        <Bottom />
        <Tasks />
        <Activate>
          <ActivateTitle>Activate Windows</ActivateTitle>
          Go to Settings to activate Windows.
        </Activate>
        <Watermark>
          <WatermarkWord>مستقل</WatermarkWord>
          mostaql.com
        </Watermark>
      </Page>
    </>
  );
}
